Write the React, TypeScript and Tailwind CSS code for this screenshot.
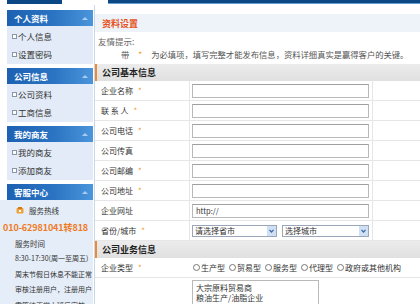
import React from "react";

const F = "font-['Noto_Sans_CJK_SC','Noto_Sans',sans-serif]";

function SideHeader({ title }: { title: string }) {
  return (
    <div className="h-[16px] flex items-center justify-between pl-[7px] pr-[5px] bg-[linear-gradient(to_right,#1d61b2,#2b74c3_55%,#4a95db)]">
      <span className="text-[8.5px] font-bold text-white leading-none">{title}</span>
      <svg width="6" height="4" viewBox="0 0 6 4">
        <polygon points="0,4 3,1 6,4" fill="#a9cdf2" />
      </svg>
    </div>
  );
}

function SideItem({ label }: { label: string }) {
  return (
    <div className="h-[18px] flex items-center pl-[5px] gap-[1px]">
      <span className="w-[5px] h-[5px] border border-[#8796ab] bg-white" />
      <span className="text-[8.5px] text-[#333] leading-none">{label}</span>
    </div>
  );
}

function SideSection({ title, items }: { title: string; items: string[] }) {
  return (
    <div className="mb-[4px]">
      <SideHeader title={title} />
      <div className="bg-[#e2ebf7] py-[1px]">
        {items.map((i) => (
          <SideItem key={i} label={i} />
        ))}
      </div>
    </div>
  );
}

function Star() {
  return <span className="text-[#f29a2e] ml-[5px] text-[8px]">*</span>;
}

function Row({ label, star, children }: { label: string; star?: boolean; children?: React.ReactNode }) {
  return (
    <div className="h-[20px] flex border-b border-[#e6e6e6]">
      <div className="w-[95px] flex items-center pl-[6px] text-[8px] text-[#333] border-r border-[#e6e6e6]">
        <span>{label}</span>
        {star && <Star />}
      </div>
      <div className="w-[183px] flex items-center pl-[2px] border-r border-[#e6e6e6]">{children}</div>
      <div className="flex-1" />
    </div>
  );
}

function Input({ value }: { value?: string }) {
  return (
    <div className="w-[177px] h-[14px] border border-[#b9b9b9] border-t-[#a0a0a0] bg-white flex items-center pl-[3px] text-[7.5px] text-[#333]">
      {value}
    </div>
  );
}

function Select({ text, w }: { text: string; w: string }) {
  return (
    <div className={`${w} h-[12px] border border-[#9aa7b8] bg-white flex items-center justify-between text-[8px] text-[#333]`}>
      <span className="pl-[2px] leading-none">{text}</span>
      <span className="w-[9px] h-[10px] bg-[#cfe0f5] flex items-center justify-center">
        <svg width="5" height="4" viewBox="0 0 5 4">
          <polyline points="0.5,0.8 2.5,3 4.5,0.8" fill="none" stroke="#3b66a8" strokeWidth="1.2" />
        </svg>
      </span>
    </div>
  );
}

function SectionHead({ title }: { title: string }) {
  return (
    <div className="h-[17px] flex items-center bg-[linear-gradient(#ececec,#e0e0e0)] border-l-[2px] border-[#f08a32] pl-[5px]">
      <span className="text-[9px] font-bold text-[#222] leading-none">{title}</span>
    </div>
  );
}

function Radio({ label }: { label: string }) {
  return (
    <span className="flex items-center mr-[4px]">
      <span className="w-[7px] h-[7px] rounded-full border border-[#777] bg-white mr-[1px]" />
      <span>{label}</span>
    </span>
  );
}

export default function App() {
  return (
    <div className={`w-[420px] h-[304px] overflow-hidden bg-white ${F}`}>
      <div className="flex h-[4px]">
        <div className="w-[7px]" />
        <div className="w-[55px] bg-[#0c4886]" />
        <div className="w-[46px]" />
        <div className="flex-1 bg-[#0c4886] border-b border-[#6c9bd0]" />
      </div>
      <div className="flex">
        <div className="w-[93px] pl-[7px] mt-[6px]">
          <SideSection title="个人资料" items={["个人信息", "设置密码"]} />
          <SideSection title="公司信息" items={["公司资料", "工商信息"]} />
          <SideSection title="我的商友" items={["我的商友", "添加商友"]} />
          <SideHeader title="客服中心" />
          <div className="-ml-[7px] bg-[#e5edf8] pl-[15px] pt-[3px] pb-[10px] text-[7px] text-[#333] leading-[15.5px] overflow-hidden">
            <div className="flex items-center gap-[5px] pl-[1px] text-[7.5px]">
              <svg width="8" height="7" viewBox="0 0 8 7">
                <rect x="0.5" y="1" width="7" height="5.5" rx="1" fill="#f0a13a" />
                <rect x="2" y="0" width="4" height="2" fill="#d07a1a" />
                <rect x="3" y="3" width="2" height="2" fill="#fff" />
              </svg>
              <span>服务热线</span>
            </div>
            <div className="text-[9px] font-bold text-[#f07a1e] -ml-[12px] leading-[17px] whitespace-nowrap tracking-[-0.1px]">010-62981041转818</div>
            <div className="text-[7.5px]">服务时间</div>
            <div className="whitespace-nowrap">8:30-17:30(周一至周五)</div>
            <div className="whitespace-nowrap">周末节假日休息不能正常</div>
            <div className="whitespace-nowrap">审核注册用户，注册用户</div>
            <div className="whitespace-nowrap">需等待正常上班后审核，</div>
          </div>
        </div>
        <div className="flex-1 ml-[1px] border-l border-[#c9d7ea] mt-[1px]">
          <div className="mt-[9px] h-[18px] bg-[#eef2f9] flex items-center pl-[7px]">
            <span className="text-[9px] font-bold text-[#e5531c] leading-none">资料设置</span>
          </div>
          <div className="pl-[3px] pt-[3px] text-[8.5px] text-[#666] leading-[13px]">友情提示:</div>
          <div className="pl-[26px] text-[8.3px] text-[#555] leading-[13px] whitespace-nowrap">
            带<span className="text-[#f29a2e] mx-[9px]">*</span>为必填项，填写完整才能发布信息，资料详细真实是赢得客户的关键。
          </div>
          <div className="mt-[3px]">
            <SectionHead title="公司基本信息" />
          </div>
          <Row label="企业名称" star>
            <Input />
          </Row>
          <Row label="联 系 人" star>
            <Input />
          </Row>
          <Row label="公司电话" star>
            <Input />
          </Row>
          <Row label="公司传真">
            <Input />
          </Row>
          <Row label="公司邮编" star>
            <Input />
          </Row>
          <Row label="公司地址" star>
            <Input />
          </Row>
          <Row label="企业网址">
            <Input value="http://" />
          </Row>
          <Row label="省份/城市" star>
            <div className="flex gap-[5px]">
              <Select text="请选择省市" w="w-[85px]" />
              <Select text="选择城市" w="w-[87px]" />
            </div>
          </Row>
          <SectionHead title="公司业务信息" />
          <div className="h-[20px] flex border-b border-[#e6e6e6]">
            <div className="w-[95px] flex items-center pl-[6px] text-[8px] text-[#333]">
              <span>企业类型</span>
              <Star />
            </div>
            <div className="flex items-center pl-[3px] text-[8px] text-[#333] whitespace-nowrap">
              <Radio label="生产型" />
              <Radio label="贸易型" />
              <Radio label="服务型" />
              <Radio label="代理型" />
              <Radio label="政府或其他机构" />
            </div>
          </div>
          <div className="flex">
            <div className="w-[95px]" />
            <div className="ml-[2px] mt-[2px] w-[127px] h-[40px] border border-[#b9b9b9] pl-[3px] pt-[2px] text-[8px] text-[#333] leading-[10px]">
              <div>大宗原料贸易商</div>
              <div>粮油生产/油脂企业</div>
            </div>
          </div>
        </div>
      </div>
    </div>
  );
}
